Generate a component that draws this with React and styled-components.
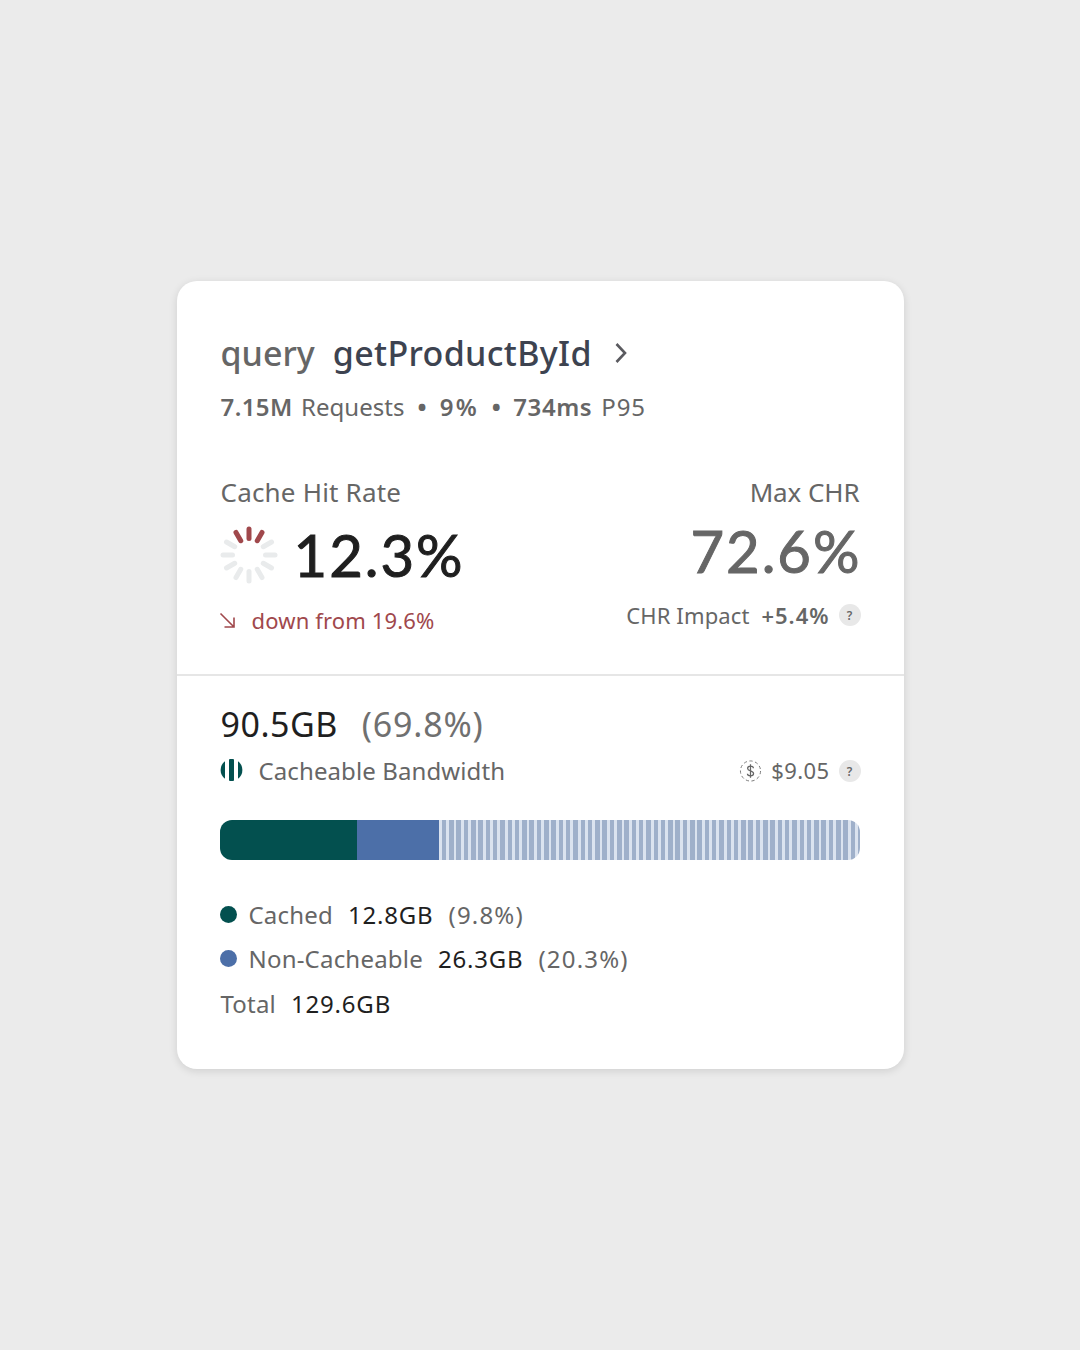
import React from 'react';
import styled, { createGlobalStyle } from 'styled-components';

const GlobalStyle = createGlobalStyle`
  html, body {
    margin: 0;
    padding: 0;
    background: #ebebeb;
  }
`;

const Page = styled.div`
  width: 1080px;
  height: 1350px;
  display: flex;
  align-items: center;
  justify-content: center;
  font-family: 'Noto Sans', 'Open Sans', sans-serif;
  color: #666666;
`;

const Card = styled.div`
  width: 727px;
  height: 788px;
  box-sizing: border-box;
  background: #ffffff;
  border-radius: 20px;
  box-shadow: 0 2px 8px rgba(0, 0, 0, 0.12);
  display: flex;
  flex-direction: column;
`;

const TopSection = styled.div`
  height: 395px;
  box-sizing: border-box;
  padding: 49px 44px 0 44px;
  border-bottom: 2px solid #e6e6e6;
`;

const BottomSection = styled.div`
  padding: 25px 44px 0 43px;
`;

const TitleRow = styled.div`
  display: flex;
  align-items: center;
  height: 46px;
  font-size: 34px;
  font-weight: 500;
`;

const QueryWord = styled.span`
  color: #666666;
  letter-spacing: 0;
  margin-right: 18px;
`;

const QueryName = styled.span`
  color: #3d4350;
  letter-spacing: 0.35px;
  margin-right: 23px;
`;

const MetaRow = styled.div`
  display: flex;
  align-items: center;
  height: 30px;
  margin-top: 15px;
  font-size: 24px;
  letter-spacing: 0.05px;
  white-space: pre;
`;

const Strong = styled.span`
  font-weight: 600;
  letter-spacing: ${props => props.$spacing || '0.4px'};
  color: #666666;
  margin-right: ${props => props.$gap || 0}px;
`;

const MetaSuffix = styled.span`
  letter-spacing: 0.9px;
`;

const Sep = styled.span`
  margin: 0 ${props => props.$space || 13}px;
  font-weight: 700;
`;

const StatsRow = styled.div`
  display: flex;
  justify-content: space-between;
  margin-top: 56px;
`;

const StatColumn = styled.div`
  display: flex;
  flex-direction: column;
  align-items: ${props => (props.$right ? 'flex-end' : 'flex-start')};
`;

const StatLabel = styled.div`
  height: 30px;
  line-height: 30px;
  font-size: 26px;
  letter-spacing: ${props => props.$spacing || '0.2px'};
`;

const StatValueRow = styled.div`
  display: flex;
  align-items: center;
  gap: 16px;
  height: 74px;
  margin-top: 11px;
`;

const SpinnerSlot = styled.div`
  display: flex;
  margin-left: -1px;
`;

const BigValue = styled.div`
  font-family: Lato, 'Noto Sans', sans-serif;
  font-size: 58px;
  letter-spacing: 2px;
  line-height: 74px;
  color: ${props => props.color || '#1f1f1f'};
  -webkit-text-stroke: 1px ${props => props.color || '#1f1f1f'};
  margin-top: ${props => props.$lift || 0}px;
  margin-right: ${props => props.$pull || 0}px;
`;

const DownRow = styled.div`
  display: flex;
  align-items: center;
  gap: 16px;
  height: 30px;
  margin-top: 13px;
  margin-left: -2px;
  color: #a0484c;
  font-size: 22px;
  letter-spacing: 0.15px;
`;

const ImpactRow = styled.div`
  display: flex;
  align-items: center;
  height: 30px;
  margin-top: 8px;
  margin-right: -1px;
  font-size: 22px;
  letter-spacing: 0.15px;
`;

const HelpBadge = styled.span`
  width: 22px;
  height: 22px;
  border-radius: 50%;
  background: #e8e8e8;
  color: #666666;
  font-size: 12px;
  font-weight: 600;
  letter-spacing: 0;
  display: inline-flex;
  align-items: center;
  justify-content: center;
  margin-left: 9px;
  margin-top: ${props => props.$drop || 0}px;
`;

const SizeRow = styled.div`
  display: flex;
  align-items: center;
  height: 46px;
  font-size: 34px;
  letter-spacing: 0.5px;
  color: #1f1f1f;
  margin-left: 1px;
`;

const SizeShare = styled.span`
  color: #707070;
  letter-spacing: 0.8px;
  margin-left: 24px;
`;

const BandwidthRow = styled.div`
  display: flex;
  align-items: center;
  justify-content: space-between;
  height: 30px;
  margin-top: 8px;
  font-size: 24px;
  letter-spacing: 0.1px;
  margin-right: -1px;
`;

const BandwidthLabel = styled.div`
  display: flex;
  align-items: center;
  gap: 16px;
`;

const PriceGroup = styled.div`
  display: flex;
  align-items: center;
  font-size: 22px;
  letter-spacing: 0.4px;
`;

const PriceIcon = styled.span`
  display: flex;
  margin-right: 9px;
  margin-top: 2px;
`;

const Bar = styled.div`
  display: flex;
  width: 640px;
  height: 40px;
  margin-top: 35px;
  border-radius: 12px;
  overflow: hidden;
`;

const BarCached = styled.div`
  width: 137px;
  background: #03504f;
`;

const BarNonCacheable = styled.div`
  width: 82px;
  background: #4c6fa8;
`;

const BarRest = styled.div`
  flex: 1;
  background: repeating-linear-gradient(
    90deg,
    #dbe3ef 0,
    #dbe3ef 2.8px,
    #9fb0ca 2.8px,
    #9fb0ca 7.3px
  );
`;

const Legend = styled.div`
  display: flex;
  flex-direction: column;
  gap: 14.5px;
  margin-top: 39px;
`;

const LegendRow = styled.div`
  display: flex;
  align-items: center;
  height: 30px;
  font-size: 24px;
  letter-spacing: 0.2px;
  margin-left: ${props => props.$nudge || 0}px;
`;

const Dot = styled.span`
  width: 17px;
  height: 17px;
  border-radius: 50%;
  background: ${props => props.color};
  margin-right: 12px;
`;

const LegendValue = styled.span`
  color: #1f1f1f;
  letter-spacing: 0.8px;
  margin: 0 15px;
`;

const LegendShare = styled.span`
  letter-spacing: 1.2px;
`;

const Spinner = () => {
  const ticks = Array.from({ length: 12 }, (_, i) => i);
  return (
    <svg width="58" height="58" viewBox="0 0 58 58">
      {ticks.map(i => {
        const active = i === 0 || i === 1 || i === 11;
        return (
          <line
            key={i}
            x1="29"
            y1="3"
            x2="29"
            y2="12.5"
            stroke={active ? '#a0484c' : '#e9ebec'}
            strokeWidth="5"
            strokeLinecap="round"
            transform={`rotate(${i * 30} 29 29)`}
          />
        );
      })}
    </svg>
  );
};

const DownArrow = () => (
  <svg width="17" height="17" viewBox="0 0 17 17" fill="none" stroke="#a0484c" strokeWidth="1.6">
    <path d="M1.5 1.5L15 15M15 5.5V15H5.5" />
  </svg>
);

const Chevron = () => (
  <svg width="12" height="22" viewBox="0 0 12 22" fill="none" stroke="#5a5a5f" strokeWidth="2.6">
    <path d="M1.5 2L10 11L1.5 20" />
  </svg>
);

const StripeIcon = () => (
  <svg width="23" height="22" viewBox="0 0 23 22" fill="#03504f">
    <rect x="9" y="0" width="5" height="22" rx="1" />
    <path d="M5 2.2V19.8A11 11 0 0 1 5 2.2Z" />
    <path d="M18 2.2V19.8A11 11 0 0 0 18 2.2Z" />
  </svg>
);

const DollarIcon = () => (
  <svg width="23" height="24" viewBox="0 0 24 24" fill="none">
    <circle cx="12" cy="12" r="10.5" stroke="#777777" strokeWidth="1" strokeDasharray="3.4 2.6" />
    <path
      d="M15 9C15 7.8 13.8 7 12 7S9 7.9 9 9.3C9 12.4 15.2 11.3 15.2 14.6C15.2 16.1 13.9 17 12 17S8.8 16.1 8.8 14.8M12 5V19"
      stroke="#666666"
      strokeWidth="1.3"
    />
  </svg>
);

const App = () => (
  <Page>
    <GlobalStyle />
    <Card>
      <TopSection>
        <TitleRow>
          <QueryWord>query</QueryWord>
          <QueryName>getProductById</QueryName>
          <Chevron />
        </TitleRow>
        <MetaRow>
          <Strong $gap={2}>7.15M</Strong> Requests<Sep>•</Sep><Strong $spacing="2.4px">9%</Strong><Sep $space={12.5}>•</Sep><Strong $spacing="0.6px" $gap={9}>734ms</Strong><MetaSuffix>P95</MetaSuffix>
        </MetaRow>
        <StatsRow>
          <StatColumn>
            <StatLabel>Cache Hit Rate</StatLabel>
            <StatValueRow>
              <SpinnerSlot>
                <Spinner />
              </SpinnerSlot>
              <BigValue>12.3%</BigValue>
            </StatValueRow>
            <DownRow>
              <DownArrow />
              down from 19.6%
            </DownRow>
          </StatColumn>
          <StatColumn $right>
            <StatLabel $spacing="-0.1px">Max CHR</StatLabel>
            <StatValueRow>
              <BigValue color="#666666" $lift={-8} $pull={-2}>72.6%</BigValue>
            </StatValueRow>
            <ImpactRow>
              CHR Impact&nbsp;&nbsp;<Strong $spacing="1px">+5.4%</Strong>
              <HelpBadge>?</HelpBadge>
            </ImpactRow>
          </StatColumn>
        </StatsRow>
      </TopSection>
      <BottomSection>
        <SizeRow>
          90.5GB<SizeShare>(69.8%)</SizeShare>
        </SizeRow>
        <BandwidthRow>
          <BandwidthLabel>
            <StripeIcon />
            Cacheable Bandwidth
          </BandwidthLabel>
          <PriceGroup>
            <PriceIcon>
              <DollarIcon />
            </PriceIcon>
            $9.05
            <HelpBadge $drop={2}>?</HelpBadge>
          </PriceGroup>
        </BandwidthRow>
        <Bar>
          <BarCached />
          <BarNonCacheable />
          <BarRest />
        </Bar>
        <Legend>
          <LegendRow>
            <Dot color="#03504f" />
            Cached<LegendValue>12.8GB</LegendValue><LegendShare>(9.8%)</LegendShare>
          </LegendRow>
          <LegendRow>
            <Dot color="#4c6fa8" />
            Non-Cacheable<LegendValue>26.3GB</LegendValue><LegendShare>(20.3%)</LegendShare>
          </LegendRow>
          <LegendRow $nudge={1}>
            Total<LegendValue>129.6GB</LegendValue>
          </LegendRow>
        </Legend>
      </BottomSection>
    </Card>
  </Page>
);

export default App;
